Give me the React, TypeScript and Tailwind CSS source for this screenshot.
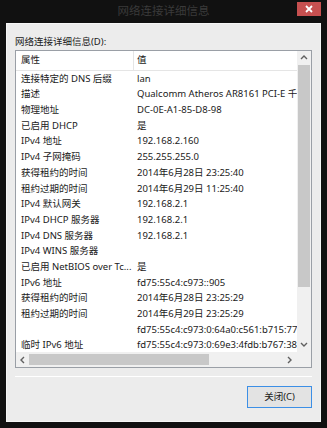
import React from "react";

const rows: [string, string][] = [
  ["连接特定的 DNS 后缀", "lan"],
  ["描述", "Qualcomm Atheros AR8161 PCI-E 千兆以太网控制器"],
  ["物理地址", "DC-0E-A1-85-D8-98"],
  ["已启用 DHCP", "是"],
  ["IPv4 地址", "192.168.2.160"],
  ["IPv4 子网掩码", "255.255.255.0"],
  ["获得租约的时间", "2014年6月28日 23:25:40"],
  ["租约过期的时间", "2014年6月29日 11:25:40"],
  ["IPv4 默认网关", "192.168.2.1"],
  ["IPv4 DHCP 服务器", "192.168.2.1"],
  ["IPv4 DNS 服务器", "192.168.2.1"],
  ["IPv4 WINS 服务器", ""],
  ["已启用 NetBIOS over Tc...", "是"],
  ["IPv6 地址", "fd75:55c4:c973::905"],
  ["获得租约的时间", "2014年6月28日 23:25:29"],
  ["租约过期的时间", "2014年6月29日 23:25:29"],
  ["", "fd75:55c4:c973:0:64a0:c561:b715:773"],
  ["临时 IPv6 地址", "fd75:55c4:c973:0:69e3:4fdb:b767:38b"],
];

const font = { fontFamily: '"Noto Sans", "Noto Sans CJK SC", sans-serif' };

// small scrollbar chevron
const Chevron = ({ dir }: { dir: "up" | "down" | "left" | "right" }) => {
  const pts = {
    up: "1,5 4,2 7,5",
    down: "1,2 4,5 7,2",
    left: "5,1 2,4 5,7",
    right: "2,1 5,4 2,7",
  }[dir];
  return (
    <svg width="8" height="8" viewBox="0 0 8 8">
      <polyline points={pts} fill="none" stroke="#606060" strokeWidth="1.4" />
    </svg>
  );
};

export default function App() {
  return (
    <div
      className="w-[327px] h-[428px] bg-[#111111] flex flex-col px-[6px] pb-[6px] text-[9.5px] text-[#1a1a1a]"
      style={font}
    >
      {/* Title bar */}
      <div className="h-[23px] grid grid-cols-[1fr_auto_1fr] items-start">
        <div />
        <div className="pt-[4px] text-[11.5px] leading-[14px] text-[#3a3a3a]">网络连接详细信息</div>
        <div className="flex justify-end pt-[2px]">
          <div className="w-[24px] h-[14px] bg-[#c75050] flex items-center justify-center">
            <svg width="8" height="8" viewBox="0 0 8 8">
              <path d="M1 1L7 7M7 1L1 7" stroke="#ffffff" strokeWidth="1.8" />
            </svg>
          </div>
        </div>
      </div>

      {/* Client area */}
      <div className="flex-1 bg-[#ececec] border border-[#f6f6f6] flex flex-col px-[8px] pt-[10px]">
        <div className="h-[16px] flex items-center">网络连接详细信息(D):</div>

        <div className="h-[318px] border border-[#9a9fa6] bg-white flex flex-col">
          <div className="flex flex-1 min-h-0">
            <div className="flex-1 min-w-0 overflow-hidden flex flex-col">
              <div className="h-[20px] shrink-0 flex border-b border-[#e5e5e5]">
                <div className="w-[118px] pl-[5px] flex items-center border-r border-[#e5e5e5]">属性</div>
                <div className="pl-[3px] flex items-center">值</div>
              </div>
              <div className="flex-1 overflow-hidden">
                {rows.map(([k, v], i) => (
                  <div key={i} className="h-[15.7px] flex items-center whitespace-nowrap">
                    <div className="w-[118px] shrink-0 pl-[5px] overflow-hidden">{k}</div>
                    <div className="pl-[3px]">{v}</div>
                  </div>
                ))}
              </div>
            </div>
            {/* vertical scrollbar */}
            <div className="w-[14px] bg-[#f0f0f0] flex flex-col">
              <div className="h-[14px] flex items-center justify-center">
                <Chevron dir="up" />
              </div>
              <div className="h-[222px] mx-px bg-[#c8c8c8]" />
              <div className="flex-1" />
              <div className="h-[14px] flex items-center justify-center">
                <Chevron dir="down" />
              </div>
            </div>
          </div>
          {/* horizontal scrollbar */}
          <div className="h-[15px] flex">
            <div className="flex-1 bg-[#f0f0f0] flex items-stretch">
              <div className="w-[13px] flex items-center justify-center">
                <Chevron dir="left" />
              </div>
              <div className="w-[180px] my-[2px] bg-[#c8c8c8]" />
              <div className="flex-1" />
              <div className="w-[14px] flex items-center justify-center">
                <Chevron dir="right" />
              </div>
            </div>
            <div className="w-[14px] bg-[#f0f0f0]" />
          </div>
        </div>

        <div className="mt-[8px] h-px bg-[#a8a8a8] border-b border-white" />

        <div className="mt-[9px] flex justify-end">
          <button className="w-[65px] h-[22px] border border-[#3c8fe6] bg-[#e3e3e3] flex items-center justify-center text-[9.5px] text-[#1a1a1a]">
            关闭(C)
          </button>
        </div>
      </div>
    </div>
  );
}
